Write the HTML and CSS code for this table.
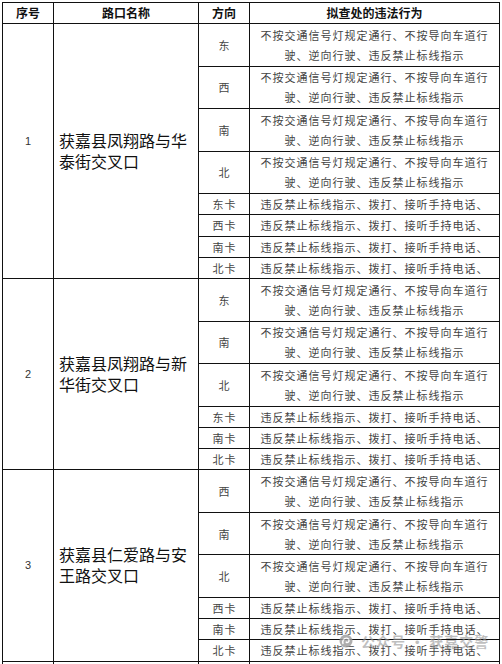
FILE: index.html
```html
<!DOCTYPE html>
<html lang="zh-CN">
<head>
<meta charset="utf-8">
<title>拟查处的违法行为</title>
<link rel="stylesheet" href="styles.css">
</head>
<body>
<div class="sheet">
  <div class="grid">
    <div class="cell head">序号</div>
    <div class="cell head">路口名称</div>
    <div class="cell head">方向</div>
    <div class="cell head">拟查处的违法行为</div>

    <div class="cell num g8 raise">1</div>
    <div class="cell name g8 raise">获嘉县凤翔路与华泰街交叉口</div>
    <div class="cell dir">东</div>
    <div class="cell act">不按交通信号灯规定通行、不按导向车道行驶、逆向行驶、违反禁止标线指示</div>
    <div class="cell dir">西</div>
    <div class="cell act">不按交通信号灯规定通行、不按导向车道行驶、逆向行驶、违反禁止标线指示</div>
    <div class="cell dir">南</div>
    <div class="cell act">不按交通信号灯规定通行、不按导向车道行驶、逆向行驶、违反禁止标线指示</div>
    <div class="cell dir">北</div>
    <div class="cell act">不按交通信号灯规定通行、不按导向车道行驶、逆向行驶、违反禁止标线指示</div>
    <div class="cell dir">东卡</div>
    <div class="cell act">违反禁止标线指示、拨打、接听手持电话、</div>
    <div class="cell dir">西卡</div>
    <div class="cell act">违反禁止标线指示、拨打、接听手持电话、</div>
    <div class="cell dir">南卡</div>
    <div class="cell act">违反禁止标线指示、拨打、接听手持电话、</div>
    <div class="cell dir">北卡</div>
    <div class="cell act">违反禁止标线指示、拨打、接听手持电话、</div>

    <div class="cell num g6">2</div>
    <div class="cell name g6">获嘉县凤翔路与新华街交叉口</div>
    <div class="cell dir">东</div>
    <div class="cell act">不按交通信号灯规定通行、不按导向车道行驶、逆向行驶、违反禁止标线指示</div>
    <div class="cell dir">南</div>
    <div class="cell act">不按交通信号灯规定通行、不按导向车道行驶、逆向行驶、违反禁止标线指示</div>
    <div class="cell dir">北</div>
    <div class="cell act">不按交通信号灯规定通行、不按导向车道行驶、逆向行驶、违反禁止标线指示</div>
    <div class="cell dir">东卡</div>
    <div class="cell act">违反禁止标线指示、拨打、接听手持电话、</div>
    <div class="cell dir">南卡</div>
    <div class="cell act">违反禁止标线指示、拨打、接听手持电话、</div>
    <div class="cell dir">北卡</div>
    <div class="cell act">违反禁止标线指示、拨打、接听手持电话、</div>

    <div class="cell num g6">3</div>
    <div class="cell name g6">获嘉县仁爱路与安王路交叉口</div>
    <div class="cell dir">西</div>
    <div class="cell act">不按交通信号灯规定通行、不按导向车道行驶、逆向行驶、违反禁止标线指示</div>
    <div class="cell dir">南</div>
    <div class="cell act">不按交通信号灯规定通行、不按导向车道行驶、逆向行驶、违反禁止标线指示</div>
    <div class="cell dir">北</div>
    <div class="cell act">不按交通信号灯规定通行、不按导向车道行驶、逆向行驶、违反禁止标线指示</div>
    <div class="cell dir">西卡</div>
    <div class="cell act">违反禁止标线指示、拨打、接听手持电话、</div>
    <div class="cell dir">南卡</div>
    <div class="cell act">违反禁止标线指示、拨打、接听手持电话、</div>
    <div class="cell dir">北卡</div>
    <div class="cell act">违反禁止标线指示、拨打、接听手持电话、</div>

    <div class="cell num"></div>
    <div class="cell name"></div>
    <div class="cell dir"></div>
    <div class="cell act"></div>
  </div>

  <div class="watermark">
    <svg class="wm-icon" width="14" height="14" viewBox="0 0 14 14" aria-hidden="true">
      <circle cx="7" cy="7" r="6.5" fill="#9a9a9a"/>
      <path d="M4 9.5 C3.2 7 4.6 4.2 7.2 4.1 C9.2 4 10.4 5.6 9.9 7.2 C9.5 8.4 8.1 8.8 7.2 8.1" fill="none" stroke="#fff" stroke-width="1.4" stroke-linecap="round"/>
    </svg>
    <span class="wm-text">公众号 · 获嘉交警</span>
  </div>
</div>
</body>
</html>
```

FILE: styles.css
```css
html, body {
  margin: 0;
  padding: 0;
  background: #fff;
}

body {
  font-family: "Noto Sans CJK SC", "Liberation Sans", sans-serif;
  color: #444;
}

.sheet {
  position: relative;
  height: 664px;
  overflow: hidden;
  padding: 2px 0 0 2px;
  box-sizing: border-box;
}

.grid {
  display: grid;
  width: 496px;
  grid-template-columns: 50px 144px 50px 249px;
  grid-template-rows:
    20px
    repeat(4, 41.5px) repeat(4, 20.25px)
    repeat(3, 41.5px) repeat(3, 20.25px)
    repeat(3, 41.5px) repeat(3, 20.25px)
    41.5px;
  gap: 1px;
  padding: 1px;
  background: #111;
}

.cell {
  background: #fff;
  display: flex;
  align-items: center;
  justify-content: center;
  text-align: center;
  overflow: hidden;
}

.g8 { grid-row: span 8; }
.g6 { grid-row: span 6; }

.raise { padding-bottom: 20px; }

.head {
  font-size: 12px;
  font-weight: 700;
  color: #111;
  line-height: 20px;
}

.num {
  font-family: "Liberation Sans", sans-serif;
  font-size: 11px;
  color: #333;
}

.name {
  justify-content: flex-start;
  text-align: left;
  padding: 0 5px;
  font-size: 16px;
  line-height: 21px;
  color: #111;
}

.dir {
  font-size: 11px;
  letter-spacing: 1px;
  line-height: 20px;
  padding-left: 1px;
}

.act {
  font-size: 11px;
  letter-spacing: 1px;
  line-height: 20px;
  padding: 0 6px;
}

.watermark {
  position: absolute;
  left: 339px;
  top: 631px;
  display: flex;
  align-items: center;
  gap: 8px;
  opacity: 0.8;
}

.wm-text {
  font-size: 14px;
  font-weight: 700;
  color: rgba(150, 150, 150, 0.75);
  letter-spacing: 1px;
  white-space: nowrap;
}
```
